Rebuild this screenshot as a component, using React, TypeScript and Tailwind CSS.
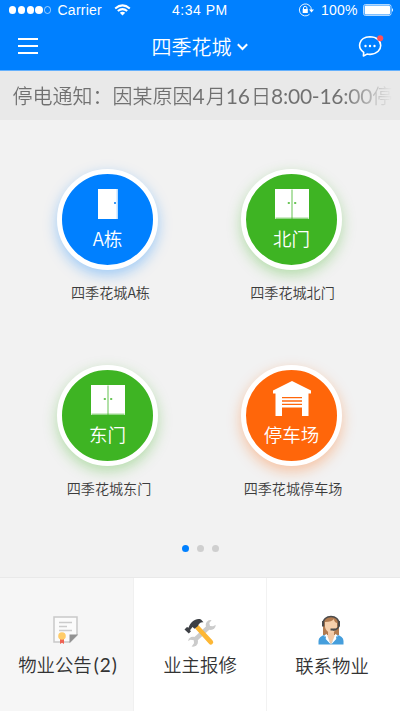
import React from "react";

function StatusBar() {
  return (
    <div className="flex h-5 items-center text-[14px] leading-5 text-white">
      <div className="flex w-[57.5px] items-center gap-[1.6px] pl-[9px]">
        {[0, 1, 2, 3].map((i) => (
          <i key={i} className="size-[7.2px] rounded-full bg-white" />
        ))}
        <i className="size-[7.2px] rounded-full border-[0.6px] border-white/60" />
      </div>
      <span className="w-[56.5px] tracking-[0.25px]">Carrier</span>
      <svg className="h-[12px] w-[17px]" viewBox="0 0 17 12" fill="none" stroke="white" strokeWidth="2">
        <path d="M1.2 4.5 Q8.5 -1.8 15.8 4.5" />
        <path d="M3.8 7.1 Q8.5 3.2 13.2 7.1" />
        <path d="M5.8 8.8 Q8.5 6.8 11.2 8.8 L8.5 11.6Z" fill="white" stroke="none" />
      </svg>
      <span className="ml-[41px] w-[127px] tracking-[0.5px]">4:34 PM</span>
      <svg className="-ml-px h-[14px] w-[16px]" viewBox="0 0 16 14" fill="none" stroke="white">
        <path d="M13.4 7.2 A6 6 0 1 0 11.5 11.3" strokeWidth="0.9" />
        <path d="M11 6.6 H16 L13.5 9.6Z" fill="white" stroke="none" />
        <path d="M5.5 6.3 V4.8 Q5.5 3.4 7.2 3.4 T8.9 4.8 V6.3" />
        <path d="M4.7 6 H9.8 V10 H4.7Z" fill="white" stroke="none" />
      </svg>
      <span className="ml-[7px] w-[41.5px] tracking-[0.2px]">100%</span>
      <svg className="h-[12px] w-[31px]" viewBox="0 0 31 12">
        <rect x="0.5" y="0.5" width="27.5" height="11" rx="2" fill="none" stroke="white" strokeWidth="0.7" />
        <rect x="1.6" y="1.6" width="25.4" height="8.8" rx="1" fill="white" />
        <path d="M29 4 Q31 6 29 8Z" fill="white" />
      </svg>
    </div>
  );
}

function TitleBar() {
  return (
    <div className="flex h-[51px] items-center pt-[1px] text-white">
      <svg className="ml-[18px] h-[18px] w-[20px]" viewBox="0 0 20 18" stroke="white" strokeWidth="2">
        <path d="M0 2H20M0 9H20M0 16H20" />
      </svg>
      <h1 className="ml-[113.5px] pt-px text-[20px] leading-6">四季花城</h1>
      <svg className="ml-[5.5px] h-[8px] w-[11px] translate-y-px" viewBox="0 0 11 8" fill="none" stroke="white" strokeWidth="2">
        <path d="M0.8 1.2 L5.5 6 L10.2 1.2" />
      </svg>
      <svg className="ml-[109.5px] h-[23px] w-[26px]" viewBox="0 0 26 23" fill="none" stroke="white" strokeWidth="1.6">
        <path d="M5.4 21 L5.7 17.4 C-1 12.7 0.5 2.2 11.8 1.7 C26 1.7 26.5 18.5 12.2 19.4 Q10.5 19.5 9 19.1 Z" strokeLinejoin="round" />
        <g fill="white" stroke="none">
          <circle cx="7.5" cy="11" r="1.2" />
          <circle cx="12" cy="11" r="1.2" />
          <circle cx="16.5" cy="11" r="1.2" />
        </g>
        <circle cx="22.2" cy="3.2" r="3" fill="#ff5058" stroke="none" />
      </svg>
    </div>
  );
}

function SingleDoor() {
  return (
    <svg className="h-[30px] w-[20px]" viewBox="0 0 20 30">
      <path d="M0 0H20V30H0Z" fill="white" />
      <rect x="16" y="13" width="2" height="2" fill="#3f9bf5" />
      <path d="M19.2 0V30" stroke="#0080ff" strokeWidth="0.4" />
    </svg>
  );
}

function DoubleDoor() {
  return (
    <svg className="h-[30px] w-[34px]" viewBox="0 0 34 30">
      <path d="M0 0H34V30H0Z" fill="white" />
      <path d="M17 0.5V30M0.5 29.2H33.5" stroke="#3eb423" strokeWidth="0.8" />
      <path d="M12.8 13h2v2h-2zM19.2 13h2v2h-2z" fill="#6cc659" />
    </svg>
  );
}

function Garage() {
  return (
    <svg className="h-[35px] w-[38px]" viewBox="0 0 38 35" fill="white">
      <path d="M19 0 L38 9.5 V12.5 H35.5 V35 H29 V16 H9 V35 H2.5 V12.5 H0 V9.5Z" />
      <path d="M9 17.3h20v2H9zM9 20.7h20v2H9zM9 24.1h20v2.3H9z" />
    </svg>
  );
}

type DoorProps = { tone: string; name: string; label: string; icon: React.ReactNode; shift?: string; iconPad?: string };

function Door({ tone, name, label, icon, shift = "", iconPad = "pt-[15px]" }: DoorProps) {
  return (
    <div className="flex w-[184px] flex-col items-center">
      <button className={`flex size-[101px] flex-col items-center rounded-full border-[5px] border-white text-white ${iconPad} ${tone}`}>
        <span className="flex h-[37px] items-start">{icon}</span>
        <span className="text-[18.5px] leading-6">{name}</span>
      </button>
      <span className={`mt-[12px] mb-px text-[14.1px] leading-5 whitespace-nowrap text-[#3c3c3c] ${shift}`}>{label}</span>
    </div>
  );
}

function NoticeIcon() {
  return (
    <svg className="h-[29px] w-[25px]" viewBox="0 0 25 29">
      <path d="M1 1H24V19L17 26H1Z" fill="#fbfbfb" stroke="#c9c9c9" strokeWidth="1.5" />
      <path d="M16.5 18.5H25L16.5 27Z" fill="#929292" />
      <path d="M6 6.5H19M6 10.5H14M6 14.5H19" stroke="#cbcbcb" strokeWidth="1.3" />
      <path d="M7 20H11V28L9 26.8L7 28Z" fill="#ef6354" />
      <circle cx="9" cy="20" r="3.8" fill="#ffcc68" />
    </svg>
  );
}

function ToolsIcon() {
  return (
    <svg className="h-[29px] w-[32px]" viewBox="0 0 32 29">
      <path d="M9 23.5 L27 7" stroke="#cbcbcb" strokeWidth="4.5" />
      <circle cx="9" cy="23.7" r="5" fill="#cbcbcb" />
      <circle cx="26.7" cy="7" r="5" fill="#cbcbcb" />
      <path d="M3 23.5 L6.5 21.8 L9.8 22.3 L10 25.3 L7.3 29 L4 28Z M28.5 1 L25.3 5 L26 8 L29 8.3 L32.5 6.5 L32 2Z" fill="white" />
      <path d="M13 9 L26.8 24.2" stroke="#fdb735" strokeWidth="4.8" strokeLinecap="round" />
      <path d="M0.5 11.5 L3 9 L4.5 9.8 C6.5 4 12 -0.5 17 1.5 L19.5 4.2 C16 3.8 14.8 6 13.7 8.2 L10.5 10.8 L8.5 9 L6 12.2 L7 13.2 L4.8 15.6Z" fill="#3d4045" />
    </svg>
  );
}

function AgentIcon() {
  return (
    <svg className="h-[30px] w-[26px]" viewBox="0 0 26 30">
      <path d="M5 9 C5-1 21-1 21 9 V20H5Z" fill="#b27b4f" />
      <path d="M10 15H16V20L19 22L13 30L7 22L10 20Z" fill="#f1c8a5" />
      <path d="M7 7 Q14 7 16 4 Q16 7 19 8 V12 Q18 17 13 18 Q8 17 7 12Z" fill="#f6d0ac" />
      <path d="M0.5 29.5V26Q0.5 21 8 19.5L13 29.5L18 19.5Q25.5 21 25.5 26V29.5Z" fill="#459edc" />
      <path d="M8.5 18.7L5.8 21.3L8 21.5L7.7 24L12.8 29.5L9 20ZM17.5 18.7L20.2 21.3L18 21.5L18.3 24L13.2 29.5L17 20Z" fill="white" />
      <path d="M5 10 C4-1.5 22-1.5 21 10 Q21 14.5 14.8 15" fill="none" stroke="#4b4b4b" strokeWidth="1.5" />
      <path d="M4 6H6.3V11.5H4ZM19.7 6H22V11.5H19.7ZM12.5 13.4H17.5V15.6H12.5Z" fill="#4b4b4b" />
    </svg>
  );
}

export default function App() {
  return (
    <div className="flex h-[711px] w-[400px] flex-col overflow-hidden bg-[#f2f2f2] font-['Liberation_Sans','Noto_Sans_CJK_SC',sans-serif]">
      <header className="h-[71px] shrink-0 border-b border-[#65b1fd] bg-[#0080ff]">
        <StatusBar />
        <div className="font-['Noto_Sans_CJK_SC',sans-serif] font-[350]"><TitleBar /></div>
      </header>
      <div className="h-[49px] shrink-0 overflow-hidden bg-[#e9e9e9] pl-[12.5px] font-['Noto_Sans_CJK_SC',sans-serif] text-[20px] leading-[50px] font-[350]">
        <p className="w-[387px] bg-linear-to-r from-[#707070] from-85% to-[#707070]/0 to-98% bg-clip-text whitespace-nowrap text-transparent">
          停电通知：因某原因<span className="mr-[1px] font-['Lato'] text-[21px] font-normal">4</span>月<span className="mr-[1px] font-['Lato'] text-[21px] font-normal">16</span>日<span className="font-['Lato'] text-[21px] font-normal tracking-[-0.25px]">8:00-16:00</span>停
        </p>
      </div>
      <main className="h-[457px] shrink-0 pt-[49px] font-['Noto_Sans_CJK_SC',sans-serif] font-[350]">
        <div className="ml-[15.5px] grid grid-cols-[184px_184px] gap-y-[62px]">
          <Door tone="bg-[#0080ff] shadow-[0_5px_14px_rgba(0,128,255,0.35)]" name="A栋" label="四季花城A栋" icon={<SingleDoor />} shift="translate-x-[3px]" />
          <Door tone="bg-[#3eb423] shadow-[0_5px_14px_rgba(62,180,35,0.35)]" name="北门" label="四季花城北门" icon={<DoubleDoor />} shift="translate-x-px" />
          <Door tone="bg-[#3eb423] shadow-[0_5px_14px_rgba(62,180,35,0.35)]" name="东门" label="四季花城东门" icon={<DoubleDoor />} shift="translate-x-[1.5px]" />
          <Door tone="bg-[#ff660a] shadow-[0_5px_14px_rgba(255,102,10,0.35)]" name="停车场" label="四季花城停车场" icon={<Garage />} shift="translate-x-[1.5px]" iconPad="pt-[11px] [&>span:first-child]:h-[41px]" />
        </div>
        <div className="mt-[46px] flex justify-center gap-[8px]">
          <i className="size-[7px] rounded-full bg-[#0080ff]" />
          <i className="size-[7px] rounded-full bg-[#cfcfcf]" />
          <i className="size-[7px] rounded-full bg-[#cfcfcf]" />
        </div>
      </main>
      <footer className="grid h-[134px] shrink-0 grid-cols-[134px_133px_133px] border-t border-[#e9e9e9] bg-white font-['Noto_Sans_CJK_SC',sans-serif] text-[18.4px] leading-6 font-[350] text-[#333]">
        <div className="flex flex-col items-center border-r border-[#f0f0f0] bg-[#f6f6f6] pt-[38px]">
          <div className="flex h-[36px] items-start pr-[2px]"><NoticeIcon /></div>
          <span className="ml-[3px] whitespace-nowrap">物业公告<span className="ml-[2px] font-['Lato'] text-[19px] font-normal tracking-[1px]">(2)</span></span>
        </div>
        <div className="flex flex-col items-center border-r border-[#f2f2f2] pt-[40px]">
          <div className="flex h-[34px] items-start"><ToolsIcon /></div>
          <span>业主报修</span>
        </div>
        <div className="flex flex-col items-center pt-[37px]">
          <div className="flex h-[38px] items-start pr-[5px]"><AgentIcon /></div>
          <span className="pr-[3px]">联系物业</span>
        </div>
      </footer>
    </div>
  );
}
